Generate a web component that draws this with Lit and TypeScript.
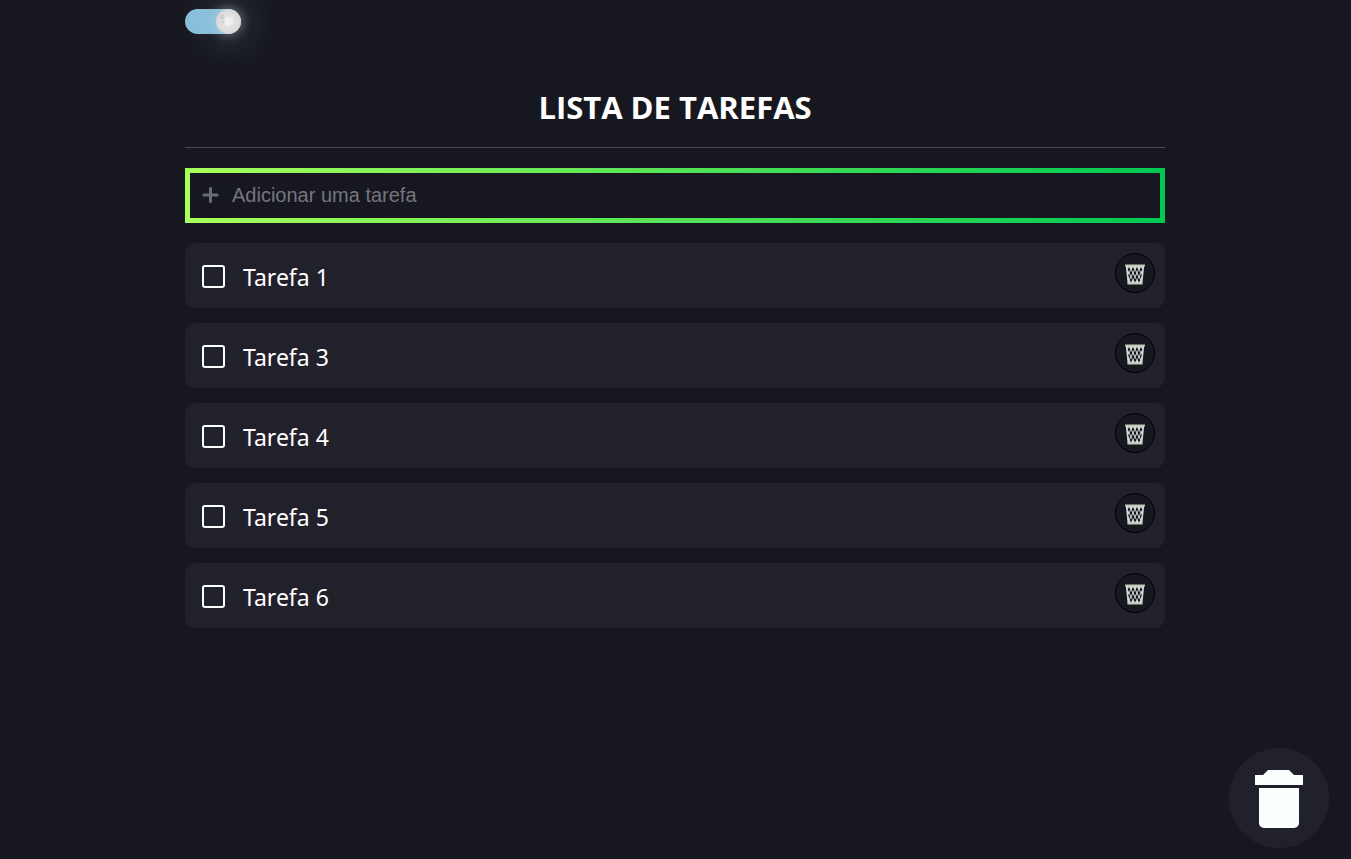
import { LitElement, html, css } from "lit";
import { customElement, state, property } from "lit/decorators.js";

interface Task {
  id: number;
  name: string;
  done: boolean;
}

@customElement("task-item")
class TaskItem extends LitElement {
  @property({ attribute: false }) task!: Task;

  static styles = css`
    :host {
      display: block;
    }
    .item {
      display: flex;
      align-items: center;
      box-sizing: border-box;
      min-height: 65px;
      padding: 10px 10px 8px 17px;
      border-radius: 10px;
      background: #21212b;
    }
    .check {
      appearance: none;
      flex: none;
      width: 23px;
      height: 23px;
      margin: 0 18px 0 0;
      border: 2px solid #fbfffd;
      border-radius: 3px;
      cursor: pointer;
    }
    .check:checked {
      background: #fbfffd;
      box-shadow: inset 0 0 0 3px #21212b;
    }
    .name {
      flex: 1;
      font-family: "Segoe UI", "Noto Sans", sans-serif;
      font-size: 23px;
      line-height: 34px;
      color: #fff;
    }
    .done {
      text-decoration: line-through;
    }
    .remove {
      align-self: flex-start;
      display: grid;
      place-items: center;
      width: 40px;
      height: 40px;
      padding: 3px 1px 0 0;
      border: 1px solid #000;
      border-radius: 50%;
      background: #17181f;
      cursor: pointer;
    }
  `;

  private toggle() {
    this.dispatchEvent(new CustomEvent("task-toggle", { detail: this.task.id }));
  }

  private remove() {
    this.dispatchEvent(new CustomEvent("task-remove", { detail: this.task.id }));
  }

  render() {
    return html`
      <div class="item">
        <input class="check" id="done" type="checkbox" .checked=${this.task.done} @change=${this.toggle} />
        <label class="name ${this.task.done ? "done" : ""}" for="done">${this.task.name}</label>
        <button class="remove" type="button" aria-label="Excluir ${this.task.name}" @click=${this.remove}>
          <svg width="20" height="21" viewBox="0 0 20 21" fill="none" aria-hidden="true">
            <path d="M.8 2h18.400L17.300 20H2.700z" fill="#d3dbd9" />
            <path
              d="M4 3l1.300 2.500-1.300 2.500-1.300-2.500zM8 3l1.300 2.500L8 8 6.700 5.500zM12 3l1.300 2.500L12 8l-1.300-2.500zM16 3l1.300 2.500L16 8l-1.300-2.500zM6 6l1.400 3L6 12 4.600 9zM10 6l1.400 3-1.400 3-1.400-3zM14 6l1.400 3-1.400 3-1.400-3zM4 9.500l1.200 3-.8 2.500L3.200 11zM8 10l1.400 3L8 16l-1.400-3zM12 10l1.400 3-1.400 3-1.400-3zM16 9.500l.8 1.500-1.200 4-.8-2.500zM6 13.500l1.300 2.500L6 18.500 4.700 16zM10 13.500l1.300 2.500-1.300 2.500L8.700 16zM14 13.500l1.300 2.500-1.300 2.500-1.300-2.500z"
              fill="#17181f"
            />
            <path d="M0 1.500h20" stroke="#bccbb9" stroke-width="2" />
            <path d="M2.500 19.500h15" stroke="#bccbb9" stroke-width="2" />
          </svg>
        </button>
      </div>
    `;
  }
}

@customElement("app-root")
class AppRoot extends LitElement {
  @state() private tasks: Task[] = [1, 3, 4, 5, 6].map((n) => ({
    id: n,
    name: `Tarefa ${n}`,
    done: false,
  }));

  static styles = css`
    :host {
      display: block;
      box-sizing: border-box;
      min-height: 100vh;
      background: #17181f;
      color: #fff;
      font-family: "Segoe UI", "Open Sans", "Noto Sans", sans-serif;
    }
    .page {
      box-sizing: border-box;
      max-width: 1001px;
      margin: 0 auto;
      padding: 9px 11px 40px 10px;
    }
    .switch {
      appearance: none;
      display: flex;
      justify-content: flex-end;
      width: 56px;
      height: 25px;
      margin: 0;
      border-radius: 13px;
      background: #87bfda;
      cursor: pointer;
    }
    .switch::before {
      content: "";
      width: 25px;
      height: 25px;
      border-radius: 50%;
      background:
        radial-gradient(circle at 6px 8px, #cfcfcf 2px, transparent 3px),
        radial-gradient(circle at 7px 13px, #d0d0d0 1px, transparent 2px),
        radial-gradient(circle, #eef3f1 3px, #e2e2e1 6px, #d9d9d8 12px);
      box-shadow: 0 0 12px rgba(205, 228, 228, 0.5), 0 0 40px rgba(205, 220, 235, 0.5);
    }
    .switch:not(:checked) {
      justify-content: flex-start;
    }
    .header {
      margin-top: 45px;
      padding-bottom: 18px;
      border-bottom: 1px solid #47474d;
    }
    .title {
      margin: 0;
      padding-top: 6px;
      font-size: 31px;
      line-height: 44px;
      font-weight: 700;
      text-align: center;
    }
    .add {
      display: flex;
      align-items: center;
      box-sizing: border-box;
      height: 55px;
      margin: 20px 0;
      padding: 0 12px 2px;
      border: 5px solid;
      border-image: linear-gradient(to right, #a8ff5a, #00c853) 1;
    }
    .plus {
      flex: none;
      margin-right: 13px;
    }
    .field {
      flex: 1;
      min-width: 0;
      padding: 0;
      border: 0;
      outline: 0;
      background: transparent;
      color: #fff;
      font: 20px/24px "Liberation Sans", Arial, sans-serif;
    }
    .field::placeholder {
      color: #757580;
      opacity: 1;
    }
    .list {
      display: grid;
      gap: 15px;
    }
    .clear {
      position: fixed;
      right: 22px;
      bottom: 11px;
      display: grid;
      place-items: center;
      width: 100px;
      height: 100px;
      padding: 2px 0 0;
      border: 0;
      border-radius: 50%;
      background: #21212b;
      cursor: pointer;
    }
  `;

  private addTask(e: KeyboardEvent) {
    const field = e.target as HTMLInputElement;
    const name = field.value.trim();
    if (e.key !== "Enter" || !name) return;
    this.tasks = [...this.tasks, { id: Date.now(), name, done: false }];
    field.value = "";
  }

  private toggleTask(e: CustomEvent) {
    this.tasks = this.tasks.map((t) => (t.id === e.detail ? { ...t, done: !t.done } : t));
  }

  private removeTask(e: CustomEvent) {
    this.tasks = this.tasks.filter((t) => t.id !== e.detail);
  }

  private clearTasks() {
    this.tasks = [];
  }

  render() {
    return html`
      <main class="page">
        <input class="switch" type="checkbox" role="switch" aria-label="Modo escuro" checked />
        <header class="header">
          <h1 class="title">LISTA DE TAREFAS</h1>
        </header>
        <div class="add">
          <svg class="plus" width="17" height="16" viewBox="0 0 17 16" aria-hidden="true">
            <path d="M8.500 1.500v13M2 8h13" stroke="#6b6c79" stroke-width="3" stroke-linecap="round" />
          </svg>
          <input class="field" type="text" aria-label="Adicionar uma tarefa" placeholder="Adicionar uma tarefa" @keyup=${this.addTask} />
        </div>
        <div class="list">
          ${this.tasks.map(
            (task) => html`<task-item .task=${task} @task-toggle=${this.toggleTask} @task-remove=${this.removeTask}></task-item>`
          )}
        </div>
      </main>
      <button class="clear" type="button" aria-label="Excluir todas as tarefas" @click=${this.clearTasks}>
        <svg width="48" height="58" viewBox="0 0 48 58" fill="#fbfffe" aria-hidden="true">
          <path d="M0 5h8l5-5h21l5 5h9v10H0z" />
          <path d="M4 18h40v35a5 5 0 0 1-5 5H9a5 5 0 0 1-5-5z" />
        </svg>
      </button>
    `;
  }
}
